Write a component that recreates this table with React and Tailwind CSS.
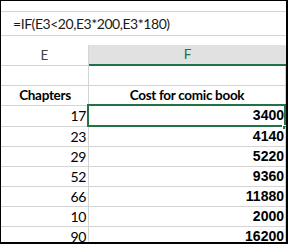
import React from "react";

const rows = [
  { e: "17", f: "3400", h: "h-[21px]", selected: true },
  { e: "23", f: "4140", h: "h-[20px]" },
  { e: "29", f: "5220", h: "h-[20px]" },
  { e: "52", f: "9360", h: "h-[20px]" },
  { e: "66", f: "11880", h: "h-[20px]" },
  { e: "10", f: "2000", h: "h-[20px]" },
  { e: "90", f: "16200", h: "h-[20px]" },
];

const calibri = { fontFamily: "Lato, 'Open Sans', sans-serif" };
const arial = { fontFamily: "'Liberation Sans', Arial, sans-serif" };

export default function App() {
  return (
    <div className="w-[288px] h-[244px] bg-white border-l border-t border-r-2 border-b-2 border-black overflow-hidden flex flex-col text-black">
      {/* formula bar */}
      <div className="h-[10px] shrink-0" />
      <div
        className="h-[25px] shrink-0 border-y border-[#d4d4d4] flex items-center pl-[12px] text-[14px] tracking-[-0.45px] text-[#1a1a1a]"
        style={calibri}
      >
        =IF(E3&lt;20,E3*200,E3*180)
      </div>
      <div className="h-[9px] shrink-0" />

      {/* column headers */}
      <div className="flex h-[21px] shrink-0" style={calibri}>
        <div className="w-[88px] border-r border-b border-[#d4d4d4] flex items-center justify-center text-[13.5px] text-[#444]">
          E
        </div>
        <div className="w-[197px] bg-[#e1e1e1] border-b-2 border-[#217346] flex items-center justify-center text-[13.5px] text-[#217346]">
          F
        </div>
      </div>

      {/* blank row */}
      <div className="flex h-[20px] shrink-0 border-b border-[#d4d4d4]">
        <div className="w-[88px] border-r border-[#d4d4d4]" />
        <div className="w-[197px] border-r border-[#d4d4d4]" />
      </div>

      {/* titles */}
      <div className="flex h-[20px] shrink-0 border-b border-[#d4d4d4] font-bold text-[13.5px] tracking-[-0.3px]" style={calibri}>
        <div className="w-[88px] border-r border-[#d4d4d4] flex items-center justify-center pl-[1px]">
          Chapters
        </div>
        <div className="w-[197px] border-r border-[#d4d4d4] flex items-center justify-center">
          Cost for comic book
        </div>
      </div>

      {rows.map((r) => (
        <div key={r.e} className={`flex ${r.h} shrink-0 border-b border-[#d4d4d4]`}>
          <div
            className="w-[88px] border-r border-[#d4d4d4] flex items-center justify-end pr-[2px] pb-[1px] text-[14px] tracking-[-0.4px]"
            style={calibri}
          >
            {r.e}
          </div>
          <div
            className="relative w-[197px] border-r border-[#d4d4d4] flex items-center justify-end pr-[1px] pb-[2px] text-[14px] font-bold leading-none"
            style={arial}
          >
            {r.f}
            {r.selected && (
              <>
                <div className="absolute left-[-2px] top-[-2px] right-[-1px] bottom-[-1px] border-2 border-[#217346]" />
                <div className="absolute right-[-2px] bottom-[-4px] w-[5px] h-[5px] bg-[#217346] border border-white" />
              </>
            )}
          </div>
        </div>
      ))}
    </div>
  );
}
